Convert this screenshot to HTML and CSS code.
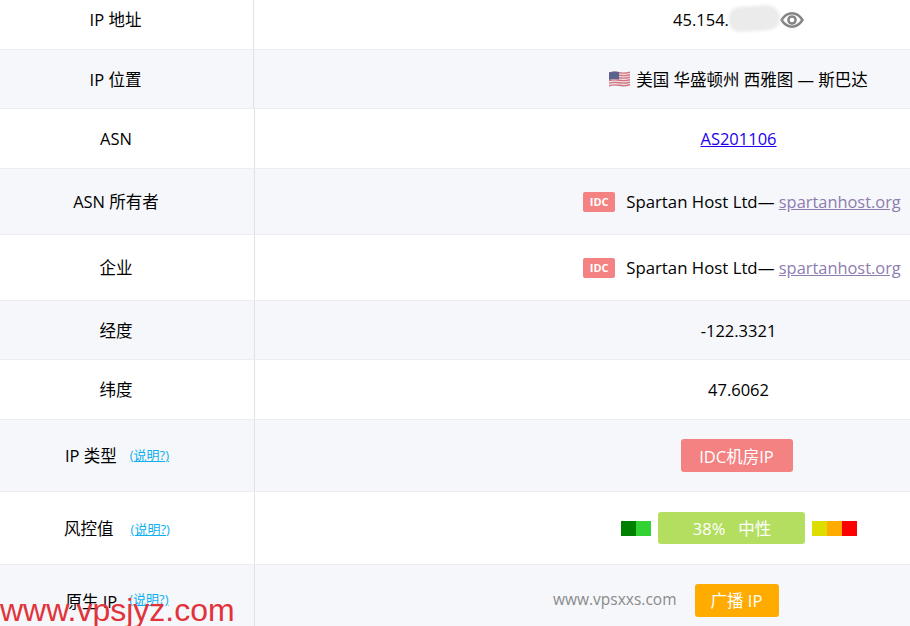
FILE: index.html
```html
<!DOCTYPE html>
<html lang="zh">
<head>
<meta charset="utf-8">
<title>IP</title>
<link rel="stylesheet" href="styles.css">
</head>
<body>
<main class="table">
  <div class="row r50 early">
    <div class="label">IP 地址</div>
    <div class="value ip"><span>45.154.</span><i class="blur"></i>
      <svg class="eye" width="24" height="18" viewBox="0 0 24 18"><path d="M1.500 9C4.500 4.400 8 2.300 12 2.300S19.500 4.400 22.500 9C19.500 13.600 16 15.700 12 15.700S4.500 13.600 1.500 9Z" fill="none" stroke="#858585" stroke-width="2.500"/><circle cx="12" cy="9" r="3.600" fill="none" stroke="#858585" stroke-width="2.500"/></svg>
    </div>
  </div>
  <div class="row r59 alt early">
    <div class="label">IP 位置</div>
    <div class="value"><svg class="flag" width="21" height="16" viewBox="0 0 21 16"><path d="M0 1.500Q5 0 10 1T21 .5V14.500Q15 16 10 15T0 15.500Z" fill="#d0737f"/><path d="M0 3.500Q5 2 10 3T21 2.500M0 6Q5 4.500 10 5.500T21 5M0 8.500Q5 7 10 8T21 7.500M0 11Q5 9.500 10 10.500T21 10M0 13.500Q5 12 10 13T21 12.500" fill="none" stroke="#f0e6e8" stroke-width="1.200"/><path d="M0 1.500Q5 0 10 1V8.500Q5 7.500 0 9Z" fill="#5c6390"/></svg><span class="place">美国 华盛顿州 西雅图 — 斯巴达</span></div>
  </div>
  <div class="row r60">
    <div class="label">ASN</div>
    <div class="value"><a class="asn" href="#">AS201106</a></div>
  </div>
  <div class="row r66 alt">
    <div class="label">ASN 所有者</div>
    <div class="value"><span class="idc">IDC</span><span class="org">Spartan Host Ltd— </span><a class="site" href="#">spartanhost.org</a></div>
  </div>
  <div class="row r66">
    <div class="label">企业</div>
    <div class="value"><span class="idc">IDC</span><span class="org">Spartan Host Ltd— </span><a class="site" href="#">spartanhost.org</a></div>
  </div>
  <div class="row r59 alt">
    <div class="label">经度</div>
    <div class="value">-122.3321</div>
  </div>
  <div class="row r60">
    <div class="label">纬度</div>
    <div class="value">47.6062</div>
  </div>
  <div class="row r72 alt">
    <div class="label with-help">IP 类型<a class="help" href="#">(说明?)</a></div>
    <div class="value"><span class="tag pink">IDC机房IP</span></div>
  </div>
  <div class="row r73">
    <div class="label with-help">风控值<a class="help risk-help" href="#">(说明?)</a></div>
    <div class="value risk">
      <i class="sq c1"></i><i class="sq c2"></i>
      <span class="score">38%&nbsp;&nbsp;&nbsp;中性</span>
      <i class="sq c3"></i><i class="sq c4"></i><i class="sq c5"></i>
    </div>
  </div>
  <div class="row r73 alt">
    <div class="label with-help">原生 IP<a class="help native-help" href="#">(说明?)</a></div>
    <div class="value"><span class="tag orange">广播 IP</span></div>
  </div>
  <div class="mark-grey">www.vpsxxs.com</div>
  <div class="mark-red">www.vpsjyz.com</div>
</main>
</body>
</html>
```
FILE: styles.css
```css
* { box-sizing: border-box; }
html, body { margin: 0; padding: 0; height: 626px; overflow: hidden; background: #fff; }
body { font-family: "Open Sans", "Noto Sans CJK SC", sans-serif; font-size: 16.5px; color: #000; }
.table { position: relative; width: 910px; height: 626px; overflow: hidden; }
.row { display: flex; flex: none; border-bottom: 1px solid #ebedf0; }
.r50 { height: 50px; padding-bottom: 10px; }
.r59 { height: 59px; }
.r60 { height: 60px; }
.r66 { height: 66px; }
.r72 { height: 72px; }
.r73 { height: 73px; }
.alt { background: #f5f7fa; }
.label { width: 255px; flex: none; display: flex; align-items: center; justify-content: center; border-right: 1px solid #e0e2e6; padding: 2px 22px 0 0; line-height: 1; }
.with-help { padding-right: 20px; }
.early .label { width: 254px; }
.r50 .label { margin-bottom: -10px; padding-bottom: 10px; }
.value { flex: 1; min-width: 0; display: flex; align-items: center; justify-content: center; padding-left: 312px; white-space: pre; }
.early .value { padding-left: 313px; }
.ip { padding-left: 314px; }
.blur { width: 51px; height: 25px; border-radius: 13px 16px 14px 12px; background: #ebebeb; filter: blur(1.500px); transform: rotate(-4deg); margin-top: -2px; }
.flag { margin-right: 6px; }
.asn { color: #2200ee; }
.idc { width: 32px; height: 20px; margin: 0 11px 0 7px; border-radius: 2px; background: #f48283; color: #fff; font-size: 11px; font-weight: 700; display: flex; align-items: center; justify-content: center; }
.org { font-size: 16.800px; }
.site { color: #8e7cb0; font-size: 16.400px; }
.help { color: #10b0f0; font-size: 13px; margin: -2px 0 0 13px; }
.risk-help { margin: 0 0 0 17px; }
.native-help { margin: -5px 0 0 12px; }
.tag { height: 33px; border-radius: 3px; color: #fff; display: flex; align-items: center; justify-content: center; }
.pink { width: 112px; background: #f48283; margin-right: 4px; }
.orange { width: 84px; background: #ffab00; margin: 0 4px 2px 0; }
.sq { width: 15px; height: 15px; display: block; }
.c1 { background: #008000; }
.c2 { background: #32d232; margin-right: 7px; }
.c3 { background: #dddd00; margin-left: 7px; }
.c4 { background: #ffab00; }
.c5 { background: #ff0000; }
.score { width: 147px; height: 32px; padding-left: 2px; border-radius: 3px; background: #b3de5f; color: #fff; display: flex; align-items: center; justify-content: center; }
.mark-grey { position: absolute; left: 553px; top: 589px; font-size: 15.500px; color: #8a8a8a; line-height: 20px; }
.mark-red { position: absolute; left: 0; top: 594px; font-family: "Liberation Sans", sans-serif; font-size: 32px; line-height: 32px; color: #e2333a; }
```
